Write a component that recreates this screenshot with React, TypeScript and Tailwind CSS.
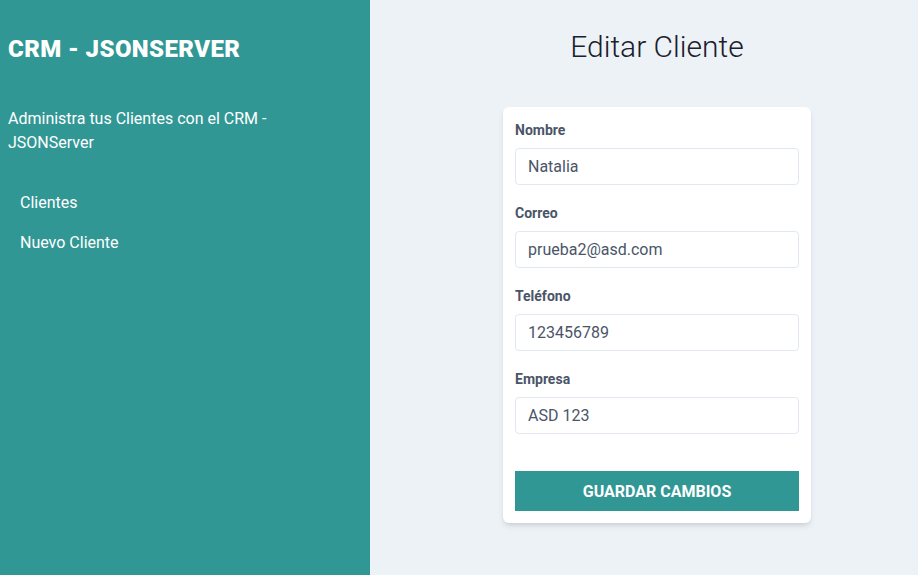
export default function App() {
  const fields = [
    { label: "Nombre", value: "Natalia" },
    { label: "Correo", value: "prueba2@asd.com" },
    { label: "Teléfono", value: "123456789" },
    { label: "Empresa", value: "ASD 123" },
  ];
  return (
    <div
      className="flex h-[575px] w-full"
      style={{ fontFamily: 'Roboto, "Noto Sans", sans-serif' }}
    >
      <aside className="w-[370px] shrink-0 bg-[#319795] px-2 pt-[33px] text-white">
        <h1 className="text-2xl leading-8 font-black tracking-[0.4px]">CRM - JSONSERVER</h1>
        <p className="mt-[42px] text-base leading-6">
          Administra tus Clientes con el CRM -<br />
          JSONServer
        </p>
        <nav className="mt-[28px] flex flex-col">
          <a className="block px-3 py-2 text-base leading-6">Clientes</a>
          <a className="block px-3 py-2 text-base leading-6">Nuevo Cliente</a>
        </nav>
      </aside>
      <main className="flex-1 bg-[#edf2f7] pl-[26px] pt-[29px]">
        <h2 className="text-center text-3xl leading-9 font-light text-[#1a202c]">
          Editar Cliente
        </h2>
        <div className="mx-auto mt-[42px] w-[308px] rounded-md bg-white px-3 pt-[13px] pb-3 shadow-md">
          {fields.map((f) => (
            <div key={f.label} className="mb-[18px]">
              <label className="mb-2 block text-sm leading-5 font-bold text-[#4a5568]">
                {f.label}
              </label>
              <div className="flex h-[37px] w-full items-center rounded border border-[#e2e8f0] px-3 pt-px text-base text-[#4a5568]">
                {f.value}
              </div>
            </div>
          ))}
          <button className="mt-[19px] h-10 w-full bg-[#319795] pt-px text-base font-bold text-white uppercase">
            Guardar Cambios
          </button>
        </div>
      </main>
    </div>
  );
}
